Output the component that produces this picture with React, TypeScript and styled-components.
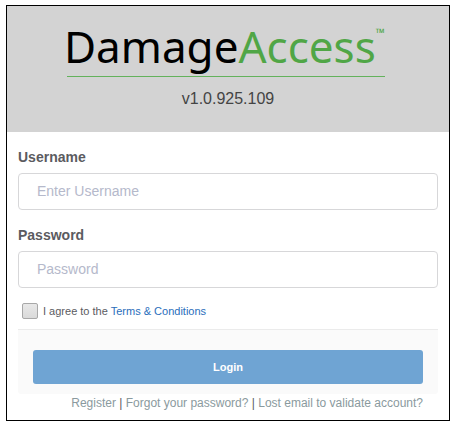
import React from "react";
import styled, { createGlobalStyle } from "styled-components";

const GlobalStyle = createGlobalStyle`
  *, *::before, *::after { box-sizing: border-box; }
  body {
    margin: 0;
    background: #fff;
    color: #5b5b5f;
    font-family: "Liberation Sans", Arial, sans-serif;
    font-size: 14px;
  }
`;

const Card = styled.main`
  margin: 5px 6px;
  border: 1px solid #000;
  background: #fff;
`;

const Header = styled.header`
  display: flex;
  flex-direction: column;
  align-items: center;
  height: 126px;
  padding-top: 16px;
  background: #d3d3d3;
`;

const Logo = styled.h1`
  display: flex;
  align-items: flex-start;
  height: 55px;
  margin: 0 4px 0 0;
  border-bottom: 1px solid #63b25c;
  color: #000;
  font-family: "Noto Sans", sans-serif;
  font-size: 44px;
  font-weight: 400;
  line-height: 48px;
`;

const LogoName = styled.span`
  margin-left: -3px;
`;

const LogoAccent = styled.span`
  color: #50a646;
`;

const TradeMark = styled.sup`
  padding-top: 3px;
  color: #50a646;
  font-size: 12px;
  line-height: 16px;
`;

const Version = styled.p`
  margin: 12px 0 0;
  color: #444;
  font-size: 16px;
  line-height: 20px;
`;

const Form = styled.form`
  padding: 16px 11px 8px;
`;

const Field = styled.div`
  margin-bottom: 16px;
`;

const Label = styled.label`
  display: block;
  margin-bottom: 7px;
  font-weight: 700;
  line-height: 18px;
`;

const TextInput = styled.input`
  display: block;
  width: 100%;
  height: 37px;
  padding: 0 18px 2px;
  border: 1px solid #d7d7d9;
  border-radius: 4px;
  background: #fff;
  color: #5b5b5f;
  font: inherit;
  &::placeholder { color: #b5b9cb; opacity: 1; }
`;

const Agreement = styled.div`
  display: flex;
  align-items: center;
  gap: 5px;
  height: 16px;
  margin: -1px 0 10px 4px;
  font-size: 11px;
`;

const Checkbox = styled.input`
  appearance: none;
  width: 16px;
  height: 16px;
  margin: 0;
  border: 1px solid #a8a8a8;
  border-radius: 2px;
  background: linear-gradient(#e8e8e8, #dadada);
  &:checked { background: #6fa4d3; }
`;

const TermsLink = styled.a`
  color: #2a6ebb;
  text-decoration: none;
`;

const Actions = styled.div`
  padding: 20px 15px 10px;
  border-top: 1px solid #ebebeb;
  border-radius: 0 0 3px 3px;
  background: #fafafa;
`;

const LoginButton = styled.button`
  display: block;
  width: 100%;
  height: 34px;
  padding: 0;
  border: 0;
  border-radius: 3px;
  background: #6fa4d3;
  color: #fff;
  font: inherit;
  font-size: 11px;
  font-weight: 700;
`;

const Links = styled.nav`
  padding: 0 15px;
  font-size: 12px;
  line-height: 18px;
  text-align: right;
`;

const HelpLink = styled.a`
  color: #8a9a9e;
  text-decoration: none;
`;

export default function App() {
  return (
    <>
      <GlobalStyle />
      <Card>
        <Header>
          <Logo>
            <LogoName>Damage</LogoName>
            <LogoAccent>Access</LogoAccent>
            <TradeMark>™</TradeMark>
          </Logo>
          <Version>v1.0.925.109</Version>
        </Header>
        <Form onSubmit={(e) => e.preventDefault()}>
          <Field>
            <Label htmlFor="username">Username</Label>
            <TextInput id="username" type="text" placeholder="Enter Username" />
          </Field>
          <Field>
            <Label htmlFor="password">Password</Label>
            <TextInput id="password" type="password" placeholder="Password" />
          </Field>
          <Agreement>
            <Checkbox id="agree" type="checkbox" />
            <span>
              <label htmlFor="agree">I agree to the</label>{" "}
              <TermsLink href="#terms">Terms &amp; Conditions</TermsLink>
            </span>
          </Agreement>
          <Actions>
            <LoginButton type="submit">Login</LoginButton>
          </Actions>
          <Links>
            <HelpLink href="#register">Register</HelpLink> |{" "}
            <HelpLink href="#forgot">Forgot your password?</HelpLink> |{" "}
            <HelpLink href="#validate">Lost email to validate account?</HelpLink>
          </Links>
        </Form>
      </Card>
    </>
  );
}
